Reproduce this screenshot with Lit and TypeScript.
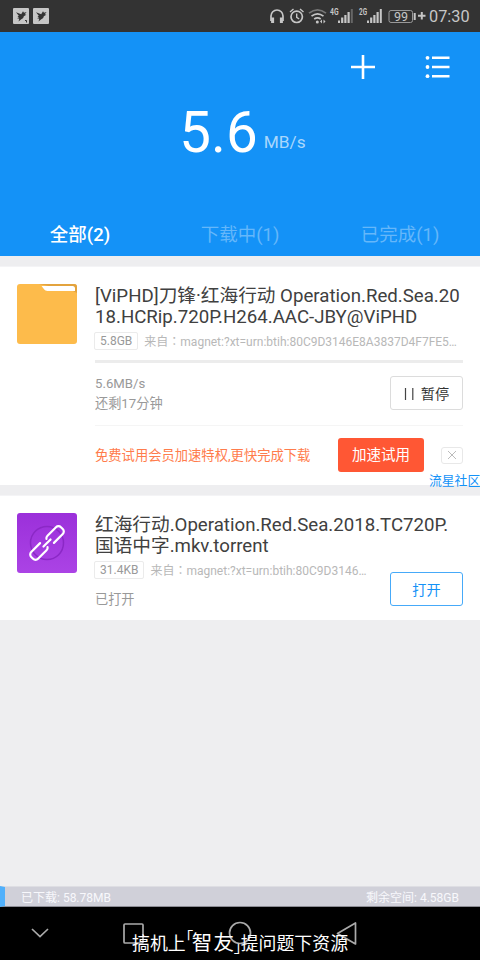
import { LitElement, html, svg, css } from "lit";
import { customElement } from "lit/decorators.js";

const bird = svg`<path fill="#333" d="M3 4.200 8.200 6.300 10 3.200 11 4.800 13.600 4 11.800 6.200 13.400 6.800 10.800 8.200C10.500 10 9.500 10.800 8.300 11.200L5.500 13.600 6.300 10.800 4 10.200 6 9.200 4.500 8.400 5.800 7.800Z"/>`;
const bars = (last: string) => svg`<g fill="#c6c6c6">
  <rect x="0" y="12.500" width="2" height="2.500"/><rect x="3.100" y="9.500" width="2.200" height="5.500"/>
  <rect x="6.300" y="7" width="2.200" height="8"/><rect x="9.500" y="4" width="2.200" height="11"/>
  <rect x="12.800" y="1" width="2" height="14" fill=${last}/></g>`;

@customElement("app-root")
export class AppRoot extends LitElement {
  static styles = css`
    :host { display: flex; flex-direction: column; position: relative; width: 480px; height: 960px; overflow: hidden;
      background: #eeeef0; font-family: Roboto, "Noto Sans CJK SC", sans-serif; box-sizing: border-box; }
    * { box-sizing: border-box; }
    svg { display: block; flex: none; }
    .nw { white-space: nowrap; }
    .status { height: 32px; flex: none; background: #333; color: #c6c6c6; display: flex; align-items: center; padding: 0 10px 0 13px; }
    .status .gap { flex: 1; }
    .birds { display: flex; gap: 4px; }
    .time { font-size: 16.300px; line-height: 33px; width: 41px; white-space: nowrap; }
    .head { height: 224px; flex: none; background: #1492f7; color: #fff; display: flex; flex-direction: column; }
    .tools { display: flex; justify-content: flex-end; gap: 50px; height: 71px; padding: 22px 30px 0 0; }
    .speed { display: flex; justify-content: center; align-items: baseline; height: 107px; gap: 6px; padding-left: 5px; }
    .speed b { font-weight: 400; font-size: 56.500px; line-height: 61px; }
    .speed span { font-size: 17.300px; color: #a9d7fc; line-height: 20px; transform: translateY(-4px); }
    .tabs { display: flex; height: 46px; }
    .tabs div { flex: 1; text-align: center; font-size: 18.500px; line-height: 50px; color: #65b7fa; }
    .tabs .on { color: #fff; font-weight: 500; }
    .card { background: #fff; flex: none; display: flex; padding: 17px 17px 0; gap: 18px; border-top: 1px solid #f4f4f6; }
    .first { margin-top: 10px; height: 219px; }
    .second { margin-top: 10px; height: 125px; }
    .body { flex: 1; min-width: 0; }
    .title { font-size: 18.670px; line-height: 21.300px; color: #404040; white-space: nowrap; height: 43px; padding-top: 2px; }
    .meta { display: flex; align-items: center; height: 18px; margin: 5px 0 0 -1px; font-size: 12px; color: #b8b8b8; white-space: nowrap; line-height: 18px; }
    .size { border: 1px solid #ebebeb; border-radius: 2px; height: 18px; line-height: 17px; padding: 0 5px; margin-right: 6px; color: #999; }
    .colon { font-family: "Noto Sans CJK TC", sans-serif; }
    .bar { height: 3px; background: #ececec; margin-top: 10px; }
    .row { display: flex; justify-content: space-between; }
    .info { font-size: 13.200px; line-height: 20px; color: #999; }
    .done { margin-top: 11px; line-height: 20px; }
    .btn { flex: none; width: 73px; height: 34px; border: 1px solid #dcdcdc; border-radius: 3px; display: flex; align-items: center; justify-content: center;
      font-size: 14.200px; line-height: 30px; color: #333; white-space: nowrap; padding-top: 1px; }
    .progress { height: 63px; border-bottom: 1px solid #f5f5f5; padding-top: 13px; }
    .progress .info { margin-top: -2px; }
    .promo { display: flex; align-items: center; height: 58px; color: #ff7c4c; font-size: 13.300px; }
    .promo .nw { flex: 1; line-height: 18px; padding-top: 1px; }
    .try { width: 86px; height: 34px; border-radius: 3px; background: #ff5734; color: #fff; font-size: 14.500px; line-height: 36px; text-align: center; }
    .close { width: 22px; height: 17px; border: 1px solid #e8e8e8; border-radius: 3px; margin-left: 17px; display: flex; align-items: center; justify-content: center; }
    .open { border-color: #46aaf9; color: #1492f7; margin-top: 16px; }
    .fill { flex: 1; }
    .storage { height: 21px; flex: none; background: #d0d0d9; border-left: 5px solid #50b0fb; border-bottom: 1px solid #8c8c94; border-top: 1px solid #dedee3; display: flex; justify-content: space-between;
      padding: 0 21px 0 16px; font-size: 12px; line-height: 22px; color: #f8f8fc; }
    .nav { height: 53px; flex: none; background: #000; }
    .community { position: absolute; left: 429px; top: 472px; font-size: 12.800px; line-height: 17px; color: #1492f7; white-space: nowrap; }
    .caption { position: absolute; left: 132px; top: 930px; color: #fff; font-size: 17.900px; line-height: 28px; white-space: nowrap; display: flex; align-items: flex-start; }
    .caption .q { font-size: 20.500px; letter-spacing: 1.300px; width: 42px; line-height: 27px; }
    .caption .b { font-size: 15px; line-height: 16px; width: 6px; margin-top: -1px; font-family: "Noto Sans CJK SC", sans-serif; font-feature-settings: "halt"; }
    .caption .rb { margin: 8px 1px 0 0; }
  `;

  render() {
    return html`
      <div class="status">
        <div class="birds">
          <svg width="16" height="16"><rect width="16" height="16" rx="1" fill="#c6c6c6"/>${bird}<path d="M12 12.500h1.500v2" stroke="#333" fill="none"/></svg>
          <svg width="16" height="16"><rect width="16" height="16" rx="1" fill="#c6c6c6"/>${bird}</svg>
        </div>
        <div class="gap"></div>
        <svg width="160" height="32" viewBox="269 0 160 32">
          <g fill="none" stroke="#c6c6c6" stroke-width="1.700">
            <path d="M271 21v-5a6 6 0 0 1 12 0v5"/><path d="M272.600 17.500v5.500M281.400 17.500v5.500" stroke-width="3"/>
            <circle cx="296.700" cy="16.800" r="5.700"/><path d="M296.700 13.500v3.800l2.500 1.700M290 12l3.500-3M303.500 12l-3.500-3" stroke-width="1.400"/>
            <path d="M309 13.200q8.500-6.800 17 0" stroke="#777"/><path d="M311.500 16.200q6-4.600 12 0M314.200 19q3.300-2.300 6.500 0"/>
          </g>
          <circle cx="317.300" cy="22" r="1.500" fill="#c6c6c6"/><path d="M320 21.500l2-2v4zM325.500 21.500l-2-2v4z" fill="#c6c6c6"/>
          <g fill="#c6c6c6" font-family="Roboto" font-weight="700" font-size="8.500"><text x="330" y="15" textLength="8.500" lengthAdjust="spacingAndGlyphs">4G</text><text x="359" y="15" textLength="8" lengthAdjust="spacingAndGlyphs">2G</text></g>
          <g transform="translate(338 8)">${bars("#666")}</g><g transform="translate(367 8)">${bars("#c6c6c6")}</g>
          <rect x="389" y="10.500" width="23.500" height="12" rx="2" fill="none" stroke="#999"/>
          <text x="394" y="21" fill="#c6c6c6" font-family="Roboto" font-size="12.500">99</text>
          <path d="M414.700 13v7M418 15.800h7.500M421.800 12v7.600" stroke="#c6c6c6" stroke-width="2"/>
        </svg>
        <div class="time">07:30</div>
      </div>
      <div class="head">
        <div class="tools">
          <svg width="24" height="26"><path d="M0 13h24M12 1v24" stroke="#fff" stroke-width="2.600"/></svg>
          <svg width="25" height="26"><path d="M7 3.800H24.500M7 13H24.500M7 22.200H24.500" stroke="#fff" stroke-width="2.600"/><g fill="#fff"><circle cx="2.500" cy="3.800" r="1.900"/><circle cx="2.500" cy="13" r="1.900"/><circle cx="2.500" cy="22.200" r="1.900"/></g></svg>
        </div>
        <div class="speed"><b>5.6</b><span>MB/s</span></div>
        <div class="tabs"><div class="on">全部(2)</div><div>下载中(1)</div><div>已完成(1)</div></div>
      </div>
      <div class="card first">
        <svg width="60" height="60"><rect width="60" height="60" rx="3" fill="#fdbb4b"/><path d="M22 0H57a3 3 0 0 1 3 3V9L56 7Z" fill="#e3a33d"/><path d="M24.500 2H55.500a2.500 2.500 0 0 1 2.500 2.500V7H30.500c-3 0-4-3-6-5Z" fill="#fff"/></svg>
        <div class="body">
          <div class="title">[ViPHD]刀锋·红海行动 Operation.Red.Sea.20<br>18.HCRip.720P.H264.AAC-JBY@ViPHD</div>
          <div class="meta"><span class="size">5.8GB</span><span>来自<span class="colon" lang="zh-TW">：</span>magnet:?xt=urn:btih:80C9D3146E8A3837D4F7FE5…</span></div>
          <div class="bar"></div>
          <div class="row progress">
            <div class="info nw">5.6MB/s<br>还剩17分钟</div>
            <div class="btn"><svg width="17" height="14"><path d="M1.500 1v12M8.800 1v12" stroke="#444" stroke-width="1.200"/></svg>暂停</div>
          </div>
          <div class="promo"><span class="nw">免费试用会员加速特权,更快完成下载</span><div class="try">加速试用</div>
            <div class="close"><svg width="10" height="10"><path d="M1 1l8 8M9 1l-8 8" stroke="#bbb"/></svg></div></div>
        </div>
      </div>
      <div class="card second">
        <svg width="60" height="60"><defs><linearGradient id="g" x2="0" y2="1"><stop stop-color="#9b30da"/><stop offset="1" stop-color="#ab43e5"/></linearGradient></defs>
          <rect width="60" height="60" rx="3" fill="url(#g)"/><circle cx="30" cy="30" r="16.500" fill="none" stroke="#8b28c6" stroke-width="1.500"/>
          <g transform="translate(30 30) rotate(-45)" fill="none" stroke="#fff" stroke-width="2.200" stroke-linecap="round" stroke-linejoin="round">
            <path d="M-5-4.800H-17.500a3.500 3.500 0 0 0-3.500 3.500v2.600A3.500 3.500 0 0 0-17.500 4.800H-5.500Q-3.500 4.800-2.500 3.300"/><path d="M5 4.800H17.500A3.500 3.500 0 0 0 21 1.300v-2.600A3.500 3.500 0 0 0 17.500-4.800H5.500Q3.500-4.800 2.500-3.300"/><path d="M-5 0H5"/>
          </g></svg>
        <div class="body">
          <div class="title">红海行动.Operation.Red.Sea.2018.TC720P.<br>国语中字.mkv.torrent</div>
          <div class="row">
            <div><div class="meta"><span class="size">31.4KB</span><span>来自<span class="colon" lang="zh-TW">：</span>magnet:?xt=urn:btih:80C9D3146…</span></div>
              <div class="info done">已打开</div></div>
            <div class="btn open">打开</div>
          </div>
        </div>
      </div>
      <div class="fill"></div>
      <div class="storage"><span>已下载: 58.78MB</span><span>剩余空间: 4.58GB</span></div>
      <div class="nav"><svg width="480" height="53" fill="none" stroke="#aaa" stroke-width="1.700"><path d="M32 22l8 7.500 8-7.500"/><rect x="124" y="17" width="19" height="19" rx="1"/><circle cx="240" cy="26" r="10.500"/><path d="M337.500 26.500 355.500 16v21Z" stroke-linejoin="round"/></svg></div>
      <div class="community">流星社区</div>
      <div class="caption"><span>搞机上</span><span class="b">「</span><span class="q">智友</span><span class="b rb">」</span><span>提问题下资源</span></div>
    `;
  }
}
